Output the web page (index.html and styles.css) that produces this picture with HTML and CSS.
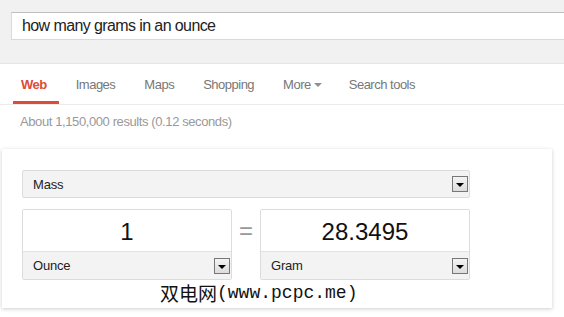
FILE: index.html
```html
<!DOCTYPE html>
<html>
<head>
<meta charset="utf-8">
<link rel="stylesheet" href="styles.css">
</head>
<body>
<div class="header">
  <div class="searchbox">how many grams in an ounce</div>
</div>
<div class="nav">
  <div class="tab active">Web</div>
  <div class="tab">Images</div>
  <div class="tab">Maps</div>
  <div class="tab">Shopping</div>
  <div class="tab more">More <span class="caret"></span></div>
  <div class="tab">Search tools</div>
</div>
<div class="stats">About 1,150,000 results (0.12 seconds)</div>
<div class="card">
  <div class="select mass">
    <span>Mass</span>
    <span class="arrow"></span>
  </div>
  <div class="row">
    <div class="unitbox">
      <div class="value">1</div>
      <div class="select unit">
        <span>Ounce</span>
        <span class="arrow"></span>
      </div>
    </div>
    <div class="eq">=</div>
    <div class="unitbox">
      <div class="value">28.3495</div>
      <div class="select unit">
        <span>Gram</span>
        <span class="arrow"></span>
      </div>
    </div>
  </div>
  <div class="watermark"><span class="cjk">双电网</span><span class="latin">(www.pcpc.me)</span></div>
</div>
</body>
</html>
```
FILE: styles.css
```css
html, body {
  margin: 0;
  padding: 0;
  background: #fff;
  overflow: hidden;
}
body {
  font-family: "Liberation Sans", Arial, sans-serif;
  width: 564px;
  height: 317px;
}
.header {
  background: #f1f1f1;
  border-bottom: 1px solid #e5e5e5;
  padding: 12px 0 0 11px;
  box-sizing: border-box;
  height: 64px;
}
.searchbox {
  width: 553px;
  height: 28px;
  box-sizing: border-box;
  background: #fff;
  border: 1px solid #d9d9d9;
  border-top-color: #c0c0c0;
  border-right: none;
  font-size: 16px;
  letter-spacing: -0.6px;
  line-height: 26px;
  padding-left: 10px;
  color: #222;
}
.nav {
  display: flex;
  height: 40px;
  border-bottom: 1px solid #ebebeb;
  padding-left: 13px;
}
.tab {
  padding: 4px 8px 0;
  margin-right: 13px;
  line-height: 33px;
  border-bottom: 3px solid transparent;
  font-size: 13px;
  letter-spacing: -0.5px;
  color: #777;
  display: flex;
  align-items: center;
}
.tab.active {
  color: #dd4b39;
  font-weight: bold;
  border-bottom-color: #dd4b39;
  padding-right: 12px;
  margin-right: 9px;
}
.tab.more {
  margin-right: 11px;
}
.caret {
  display: inline-block;
  width: 0;
  height: 0;
  border-left: 4px solid transparent;
  border-right: 4px solid transparent;
  border-top: 4px solid #909090;
  margin-left: 3px;
  margin-top: 1px;
}
.stats {
  margin-top: 9px;
  padding-left: 20px;
  font-size: 13px;
  letter-spacing: -0.4px;
  line-height: 16px;
  color: #999;
}
.card {
  position: relative;
  margin: 19px 0 0 2px;
  width: 550px;
  height: 159px;
  box-sizing: border-box;
  padding: 21px 20px 0;
  background: #fff;
  box-shadow: 0 1px 4px rgba(0,0,0,0.2);
}
.select {
  display: flex;
  align-items: center;
  justify-content: space-between;
  background: #f3f3f3;
  font-size: 13px;
  letter-spacing: -0.2px;
  color: #222;
  padding: 0 1px 0 10px;
  box-sizing: border-box;
}
.mass {
  width: 448px;
  height: 28px;
  border: 1px solid #dcdcdc;
  border-radius: 2px;
}
.arrow {
  width: 16px;
  height: 16px;
  box-sizing: border-box;
  border: 1px solid #777;
  background: linear-gradient(#f4f4f4, #dcdcdc);
  position: relative;
}
.arrow::after {
  content: "";
  position: absolute;
  left: 3px;
  top: 6px;
  border-left: 4px solid transparent;
  border-right: 4px solid transparent;
  border-top: 4px solid #000;
}
.row {
  display: flex;
  margin-top: 11px;
  width: 448px;
}
.unitbox {
  width: 210px;
  height: 71px;
  box-sizing: border-box;
  border: 1px solid #dcdcdc;
  border-radius: 2px;
  display: flex;
  flex-direction: column;
  overflow: hidden;
}
.value {
  height: 41px;
  line-height: 44px;
  text-align: center;
  font-size: 24px;
  color: #111;
  background: #fff;
}
.unit {
  flex: 1;
  border-top: 1px solid #e2e2e2;
}
.eq {
  width: 28px;
  text-align: center;
  font-size: 24px;
  color: #999;
  line-height: 44px;
}
.watermark {
  position: absolute;
  left: 158px;
  top: 132px;
  display: flex;
  align-items: center;
  color: #111;
  white-space: nowrap;
}
.cjk {
  font-family: "Noto Sans CJK SC", sans-serif;
  font-size: 19px;
  line-height: 24px;
}
.latin {
  font-family: "Liberation Mono", monospace;
  font-size: 18px;
  line-height: 24px;
}
```
